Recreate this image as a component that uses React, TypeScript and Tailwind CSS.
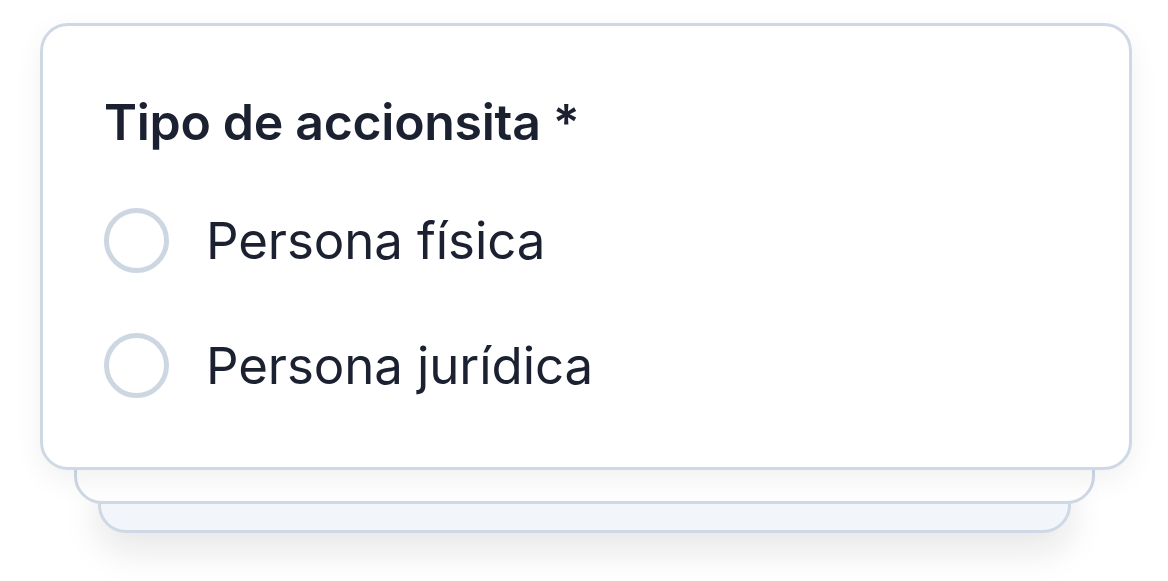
import React from 'react';

const options = ['Persona física', 'Persona jurídica'];

const Radio: React.FC<{ label: string }> = ({ label }) => (
  <label className="flex items-center h-[64px] gap-[37px] cursor-pointer">
    <span className="w-[65px] h-[65px] rounded-full border-[5px] border-[#cdd7e2] bg-white shrink-0" />
    <span className="text-[51px] leading-none text-[#1b2130] tracking-[-0.1px]">{label}</span>
  </label>
);

export default function App() {
  return (
    <div className="min-h-screen bg-white font-['Inter','Liberation_Sans',sans-serif] pt-[23px] px-[36px]">
      <div className="relative z-20 ml-[4px] h-[447px] rounded-[28px] border-[3px] border-[#cfd9e5] bg-white pl-[61px] pt-[71px] shadow-[0_10px_30px_rgba(15,23,42,0.06)]">
        <h2 className="text-[50px] font-semibold leading-none text-[#1b2130] tracking-[-0.3px]">
          Tipo de accionsita *
        </h2>
        <div className="mt-[61px] flex flex-col gap-[61px]">
          {options.map((o) => (
            <Radio key={o} label={o} />
          ))}
        </div>
      </div>
      <div className="relative z-10 -mt-[29px] ml-[38px] mr-[37px] h-[63px] rounded-b-[28px] border-[3px] border-[#cfd9e5] bg-white" />
      <div className="relative z-0 -mt-[34px] ml-[62px] mr-[61px] h-[63px] rounded-b-[28px] border-[3px] border-[#cfd9e5] bg-[#f2f5f9] shadow-[0_18px_36px_rgba(15,23,42,0.10)]" />
    </div>
  );
}
